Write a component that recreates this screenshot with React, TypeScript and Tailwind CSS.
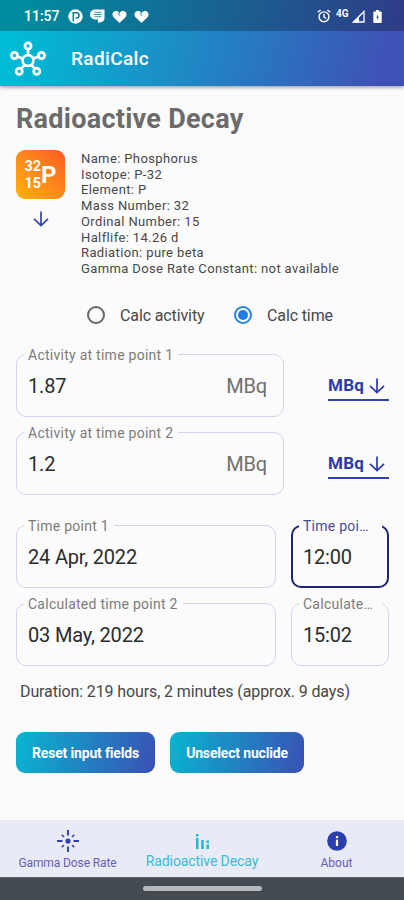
import React from "react";

type FieldProps = {
  label: string;
  labelClass?: string;
  value: string;
  unit?: string;
  className: string;
  focused?: boolean;
};

function Field({ label, labelClass = "", value, unit, className, focused }: FieldProps) {
  return (
    <fieldset
      className={`h-[70px] min-w-0 shrink-0 rounded-[10px] ${
        focused ? "border-2 border-[#1f2477] pl-[6px]" : "border border-[#d3d4ec] pl-[7px]"
      } ${className}`}
    >
      <legend
        className={`h-4 pr-[5px] pl-1 text-[14px] leading-4 tracking-[0.26px] whitespace-nowrap ${
          focused ? "text-[#4a4d92]" : "text-[#7b7b7b]"
        }`}
      >
        <span className={labelClass}>{label}</span>
      </legend>
      <div className="flex h-[47px] items-center justify-between pr-[16px] pl-[4px] text-[20px] tracking-[-0.18px] text-[#2c2c2c]">
        <span>{value}</span>
        {unit && <span className="text-[#707070]">{unit}</span>}
      </div>
    </fieldset>
  );
}

function DownArrow({ className = "" }: { className?: string }) {
  return (
    <svg viewBox="0 0 16 16" className={`h-4 w-4 ${className}`} fill="none" stroke="currentColor" strokeWidth="1.7">
      <path d="M8 0.5V14.5M1 7.8L8 14.6L15 7.8" />
    </svg>
  );
}

function UnitSelect() {
  return (
    <div className="mt-[19px] flex h-[35px] w-[61px] items-center justify-between border-b-2 border-[#3344b0] pt-[7px] pr-1 text-[#2c3ba8]">
      <span className="text-[17px] font-bold tracking-[0.3px]">MBq</span>
      <DownArrow />
    </div>
  );
}

function Molecule() {
  return (
    <svg viewBox="0 0 36 36" className="h-9 w-9" fill="none" stroke="white" strokeWidth="2.7">
      <circle cx="18" cy="19.5" r="5.4" />
      <circle cx="18" cy="5" r="3.1" />
      <circle cx="4.5" cy="14.5" r="3.1" />
      <circle cx="31.5" cy="14.5" r="3.1" />
      <circle cx="9.2" cy="30.3" r="3.1" />
      <circle cx="26.8" cy="30.3" r="3.1" />
      <path d="M18 8.3V14M7.6 15.6L12.7 17.6M28.4 15.6L23.3 17.6M11.2 27.6L14.6 24M24.8 27.6L21.4 24" />
    </svg>
  );
}

function Heart() {
  return (
    <svg viewBox="0 0 16 14" className="h-[13px] w-[15px]" fill="white">
      <path d="M8 14L1.6 7.7C-.8 5.2.7 1 4.2 1c1.5 0 2.6.6 3.8 2 1.2-1.400 2.300-2 3.800-2 3.500 0 5 4.200 2.600 6.700Z" />
      <path d="M8.500 2L6.800 4.500L9 6.200" fill="none" stroke="#137c96" strokeWidth="1" />
    </svg>
  );
}

function StatusBar() {
  return (
    <div className="flex h-[31px] items-center bg-black/25 pt-[1px] pr-[22px] pl-[24px] text-white">
      <span className="w-[36px] text-[14px] font-medium">11:57</span>
      <svg viewBox="0 0 15 15" className="ml-2 h-[15px] w-[15px]">
        <circle cx="7.500" cy="7.500" r="7.200" fill="white" />
        <path d="M5.300 12.500V3.700H8.500A2.600 2.600 0 0 1 8.500 8.900H7.500" fill="none" stroke="#0d7d91" strokeWidth="1.500" />
      </svg>
      <svg viewBox="0 0 15 14" className="ml-[7px] h-[14px] w-[15px]">
        <path d="M5 .5H14.500V9.300C14.500 12 12 13.700 8 13.700V10.500H5A5 5 0 0 1 5 .5Z" fill="white" />
        <path d="M4.500 3.300H11.500M3.500 5.500H11.500M4.500 7.700H11.500" stroke="#11788f" strokeWidth=".8" />
      </svg>
      <div className="ml-[7px] flex gap-[7px]">
        <Heart />
        <Heart />
      </div>
      <div className="ml-auto flex items-center">
        <svg viewBox="0 0 14 14" className="h-[14px] w-[14px]" fill="none" stroke="white" strokeWidth="1.400">
          <circle cx="7" cy="7.800" r="4.900" />
          <path d="M7 4.800V8L9.200 9.500M.8 3.300L3.600 1M13.200 3.300L10.400 1" />
        </svg>
        <span className="mb-[5px] ml-[5px] w-[14px] text-[10px] leading-none font-bold">4G</span>
        <svg viewBox="0 0 13 13" className="ml-[2px] h-[13px] w-[13px]">
          <path d="M1.500 12H12V1.500Z" fill="none" stroke="white" strokeWidth="1.300" />
          <path d="M1 12.500H7V6.500Z" fill="white" />
        </svg>
        <svg viewBox="0 0 9 14" className="ml-[8px] h-[13px] w-[9px]">
          <path d="M1 1.500H2.800V0H6.200V1.500H8a1 1 0 0 1 1 1V13a1 1 0 0 1-1 1H1a1 1 0 0 1-1-1V2.500a1 1 0 0 1 1-1Z" fill="white" />
          <path d="M4.800 4.500L3.200 8.200H4.300V11L6 7.200H4.800Z" fill="#2d4488" />
        </svg>
      </div>
    </div>
  );
}

const facts = [
  "Name: Phosphorus",
  "Isotope: P-32",
  "Element: P",
  "Mass Number: 32",
  "Ordinal Number: 15",
  "Halflife: 14.26 d",
  "Radiation: pure beta",
  "Gamma Dose Rate Constant: not available",
];

export default function App() {
  return (
    <div className="flex h-[900px] w-[404px] flex-col overflow-hidden bg-[#fbfbfb] font-[Roboto,sans-serif] text-[#484848]">
      <header className="h-[86px] shrink-0 bg-linear-[105deg] from-[#00bcd4] from-5% to-[#3f51b5] to-95% shadow-[0_1px_4px_rgba(0,0,0,0.45)]">
        <StatusBar />
        <div className="flex h-[55px] items-center pl-[10px] text-white">
          <Molecule />
          <span className="mt-[2px] ml-[25px] text-[19px] font-medium tracking-[0.35px]">RadiCalc</span>
        </div>
      </header>

      <main className="flex-1 pl-4">
        <h1 className="mt-[15px] h-9 text-[27px] leading-9 font-bold tracking-[0.27px] whitespace-nowrap text-[#6b6b6b]">
          Radioactive Decay
        </h1>

        <section className="mt-[13px] flex">
          <div className="flex w-[49px] flex-col items-center">
            <div className="flex h-[49px] w-[49px] items-center justify-center rounded-[9px] bg-linear-to-tr from-[#ffb007] to-[#fa5a22] font-bold text-white">
              <div className="text-right text-[14.500px] leading-[17px]">
                <div>32</div>
                <div>15</div>
              </div>
              <span className="text-[24px] leading-none">P</span>
            </div>
            <DownArrow className="mt-3 text-[#3542ae]" />
          </div>
          <div className="mt-[1px] ml-4 text-[13px] leading-[15.720px] tracking-[0.38px] whitespace-nowrap">
            {facts.map((fact) => (
              <div key={fact}>{fact}</div>
            ))}
          </div>
        </section>

        <div className="mt-[28px] flex h-5 items-center pl-[71px] text-[16px] tracking-[-0.12px]">
          <span className="h-[18px] w-[18px] rounded-full border-2 border-[#666]" />
          <span className="mt-[2px] ml-[15px] w-[85px] whitespace-nowrap">Calc activity</span>
          <span className="ml-[29px] flex h-[18px] w-[18px] items-center justify-center rounded-full border-2 border-[#2583e8]">
            <span className="h-[10px] w-[10px] rounded-full bg-[#1e7ee8]" />
          </span>
          <span className="mt-[2px] ml-[15px]">Calc time</span>
        </div>

        <div className="mt-[22px] flex">
          <Field className="w-[268px]" label="Activity at time point 1" value="1.87" unit="MBq" />
          <div className="ml-[44px]"><UnitSelect /></div>
        </div>
        <div className="mt-[8px] flex">
          <Field className="w-[268px]" label="Activity at time point 2" value="1.2" unit="MBq" />
          <div className="ml-[44px]"><UnitSelect /></div>
        </div>

        <div className="mt-[23px] flex gap-[15px]">
          <Field className="w-[260px]" label="Time point 1" value="24 Apr, 2022" />
          <Field className="w-[98px]" label="Time poi…" labelClass="inline-block w-[74px]" value="12:00" focused />
        </div>
        <div className="mt-[8px] flex gap-[15px]">
          <Field className="w-[260px]" label="Calculated time point 2" value="03 May, 2022" />
          <Field className="w-[98px]" label="Calculate…" labelClass="inline-block w-[74px]" value="15:02" />
        </div>

        <p className="mt-[16px] ml-[4px] h-5 text-[16px] leading-5 tracking-[-0.12px] whitespace-nowrap">
          Duration: 219 hours, 2 minutes (approx. 9 days)
        </p>

        <div className="mt-[30px] flex gap-[15px] text-[14px] font-bold tracking-[-0.17px] whitespace-nowrap text-white">
          <button className="h-[41px] w-[139px] rounded-[9px] bg-linear-[105deg] from-[#08b6d0] to-[#3a50b4] pt-[2px]">Reset input fields</button>
          <button className="h-[41px] w-[134px] rounded-[9px] bg-linear-[105deg] from-[#08b6d0] to-[#3a50b4] pt-[2px]">Unselect nuclide</button>
        </div>
      </main>

      <nav className="flex h-[57px] shrink-0 bg-[#e8eaf6] text-[#6560ba]">
        <div className="flex w-[135px] flex-col items-center pt-[10px]">
          <svg viewBox="0 0 22 22" className="h-[22px] w-[22px]" stroke="#3040ac" strokeWidth="1.900">
            <circle cx="11" cy="11" r="2.600" fill="#3040ac" stroke="none" />
            <path d="M11 0V5.500M11 16.500V22M0 11H5.500M16.500 11H22" />
            <path d="M4.700 4.700L7 7M15 15L17.300 17.300M17.300 4.700L15 7M7 15L4.700 17.300" strokeWidth="1.500" />
          </svg>
          <span className="mt-[3px] text-[12px] leading-4 tracking-[-0.1px]">Gamma Dose Rate</span>
        </div>
        <div className="flex w-[134px] flex-col items-center pt-[13px] text-[#37bdd3]">
          <svg viewBox="0 0 16 17" className="ml-[2px] h-[17px] w-[16px]" fill="#22b8cd">
            <path d="M1 1H3.500V3.500H1ZM1 5H3.500V16H1ZM6.200 7H8.700V16H6.200ZM11.500 7.500H14V10H11.500ZM11.500 11.500H14V16H11.500Z" />
          </svg>
          <span className="mt-[3px] text-[14px] leading-4 tracking-[-0.1px] whitespace-nowrap">Radioactive Decay</span>
        </div>
        <div className="flex flex-1 flex-col items-center pt-[11px]">
          <svg viewBox="0 0 20 20" className="h-[20px] w-[20px]">
            <circle cx="10" cy="10" r="9.800" fill="#2c3eaf" />
            <path d="M8.900 5H11.100V7.200H8.900ZM8.900 8.800H11.100V15H8.900Z" fill="white" />
          </svg>
          <span className="mt-[4px] text-[12px] leading-4">About</span>
        </div>
      </nav>
      <footer className="flex h-[23px] shrink-0 justify-center border-t border-[#5a6068] bg-[#444b50] pt-[8px]">
        <div className="h-[5px] w-[119px] rounded-full bg-[#b5b8ba]" />
      </footer>
    </div>
  );
}
